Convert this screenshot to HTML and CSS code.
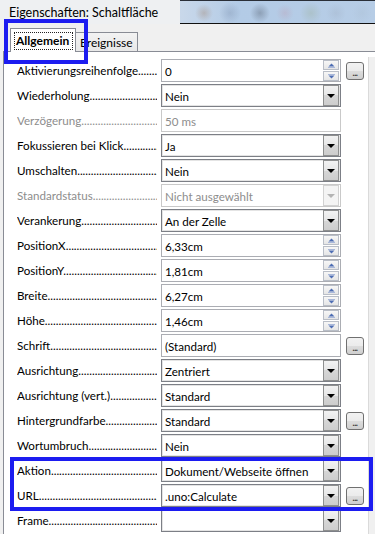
FILE: index.html
```html
<!DOCTYPE html>
<html lang="de">
<head>
    <meta charset="UTF-8">
    <meta name="viewport" content="width=device-width, initial-scale=1.0">
    <title>Eigenschaften: Schaltfläche</title>
    <link rel="stylesheet" href="styles.css">
</head>
<body>
    <div class="titlebar">
        <span class="title">Eigenschaften: Schaltfläche</span>
        <div class="glass"></div>
    </div>

    <div class="tabs">
        <div class="tab active"><span class="focus">Allgemein</span></div>
        <div class="tab">Ereignisse</div>
    </div>

    <div class="panel">
        <div class="props">
            <div class="row">
                <label class="label">Aktivierungsreihenfolge</label>
                <div class="field">
                    <span class="value">0</span>
                    <span class="spinner">
                        <i class="spin-btn"><svg width="7" height="5" viewBox="0 0 7 5"><path d="M0.5 3.5L3.5 0.5L6.5 3.5Z" fill="#4d6db3"/><path d="M0 4.5H7" stroke="#a9b8da"/></svg></i>
                        <i class="spin-btn"><svg width="7" height="5" viewBox="0 0 7 5"><path d="M0 0.5H7" stroke="#a9b8da"/><path d="M0.5 1.5L3.5 4.5L6.5 1.5Z" fill="#4d6db3"/></svg></i>
                    </span>
                </div>
                <button class="more">...</button>
            </div>

            <div class="row">
                <label class="label">Wiederholung</label>
                <div class="field list"><span class="value">Nein</span><span class="drop"></span></div>
            </div>

            <div class="row disabled">
                <label class="label">Verzögerung</label>
                <div class="field"><span class="value">50 ms</span></div>
            </div>

            <div class="row">
                <label class="label">Fokussieren bei Klick</label>
                <div class="field list"><span class="value">Ja</span><span class="drop"></span></div>
            </div>

            <div class="row">
                <label class="label">Umschalten</label>
                <div class="field list"><span class="value">Nein</span><span class="drop"></span></div>
            </div>

            <div class="row disabled">
                <label class="label">Standardstatus</label>
                <div class="field list"><span class="value">Nicht ausgewählt</span><span class="drop"></span></div>
            </div>

            <div class="row">
                <label class="label">Verankerung</label>
                <div class="field list"><span class="value">An der Zelle</span><span class="drop"></span></div>
            </div>

            <div class="row">
                <label class="label">PositionX</label>
                <div class="field">
                    <span class="value">6,33cm</span>
                    <span class="spinner">
                        <i class="spin-btn"><svg width="7" height="5" viewBox="0 0 7 5"><path d="M0.5 3.5L3.5 0.5L6.5 3.5Z" fill="#4d6db3"/><path d="M0 4.5H7" stroke="#a9b8da"/></svg></i>
                        <i class="spin-btn"><svg width="7" height="5" viewBox="0 0 7 5"><path d="M0 0.5H7" stroke="#a9b8da"/><path d="M0.5 1.5L3.5 4.5L6.5 1.5Z" fill="#4d6db3"/></svg></i>
                    </span>
                </div>
            </div>

            <div class="row">
                <label class="label">PositionY</label>
                <div class="field">
                    <span class="value">1,81cm</span>
                    <span class="spinner">
                        <i class="spin-btn"><svg width="7" height="5" viewBox="0 0 7 5"><path d="M0.5 3.5L3.5 0.5L6.5 3.5Z" fill="#4d6db3"/><path d="M0 4.5H7" stroke="#a9b8da"/></svg></i>
                        <i class="spin-btn"><svg width="7" height="5" viewBox="0 0 7 5"><path d="M0 0.5H7" stroke="#a9b8da"/><path d="M0.5 1.5L3.5 4.5L6.5 1.5Z" fill="#4d6db3"/></svg></i>
                    </span>
                </div>
            </div>

            <div class="row">
                <label class="label">Breite</label>
                <div class="field">
                    <span class="value">6,27cm</span>
                    <span class="spinner">
                        <i class="spin-btn"><svg width="7" height="5" viewBox="0 0 7 5"><path d="M0.5 3.5L3.5 0.5L6.5 3.5Z" fill="#4d6db3"/><path d="M0 4.5H7" stroke="#a9b8da"/></svg></i>
                        <i class="spin-btn"><svg width="7" height="5" viewBox="0 0 7 5"><path d="M0 0.5H7" stroke="#a9b8da"/><path d="M0.5 1.5L3.5 4.5L6.5 1.5Z" fill="#4d6db3"/></svg></i>
                    </span>
                </div>
            </div>

            <div class="row">
                <label class="label">Höhe</label>
                <div class="field">
                    <span class="value">1,46cm</span>
                    <span class="spinner">
                        <i class="spin-btn"><svg width="7" height="5" viewBox="0 0 7 5"><path d="M0.5 3.5L3.5 0.5L6.5 3.5Z" fill="#4d6db3"/><path d="M0 4.5H7" stroke="#a9b8da"/></svg></i>
                        <i class="spin-btn"><svg width="7" height="5" viewBox="0 0 7 5"><path d="M0 0.5H7" stroke="#a9b8da"/><path d="M0.5 1.5L3.5 4.5L6.5 1.5Z" fill="#4d6db3"/></svg></i>
                    </span>
                </div>
            </div>

            <div class="row">
                <label class="label">Schrift</label>
                <div class="field"><span class="value">(Standard)</span></div>
                <button class="more">...</button>
            </div>

            <div class="row">
                <label class="label">Ausrichtung</label>
                <div class="field list"><span class="value">Zentriert</span><span class="drop"></span></div>
            </div>

            <div class="row">
                <label class="label">Ausrichtung (vert.)</label>
                <div class="field list"><span class="value">Standard</span><span class="drop"></span></div>
            </div>

            <div class="row">
                <label class="label">Hintergrundfarbe</label>
                <div class="field list"><span class="value">Standard</span><span class="drop"></span></div>
                <button class="more">...</button>
            </div>

            <div class="row">
                <label class="label">Wortumbruch</label>
                <div class="field list"><span class="value">Nein</span><span class="drop"></span></div>
            </div>

            <div class="row">
                <label class="label">Aktion</label>
                <div class="field list"><span class="value">Dokument/Webseite öffnen</span><span class="drop"></span></div>
            </div>

            <div class="row">
                <label class="label">URL</label>
                <div class="field list"><span class="value">.uno:Calculate</span><span class="drop"></span></div>
                <button class="more">...</button>
            </div>

            <div class="row">
                <label class="label">Frame</label>
                <div class="field list"><span class="value"></span><span class="drop"></span></div>
            </div>
        </div>
        <div class="side-strip"></div>
    </div>

    <!-- Markierungen -->
    <div class="mark mark-tab"></div>
    <div class="mark mark-action"></div>
</body>
</html>
```

FILE: styles.css
```css
* {
    box-sizing: border-box;
}

body {
    margin: 0;
    width: 375px;
    height: 534px;
    overflow: hidden;
    position: relative;
    background: #f0f0f0;
    font-family: Lato, "Noto Sans", sans-serif;
    font-size: 12px;
    color: #000;
}

/* Titelleiste */
.titlebar {
    position: relative;
    height: 24px;
    padding-left: 9px;
    line-height: 25px;
    font-size: 12.5px;
    background: #eef0f2;
}

.glass {
    position: absolute;
    left: 180px;
    right: 0;
    top: 0;
    height: 24px;
    border-top: 1px solid #2a2f38;
    border-bottom: 1px solid #111;
    background:
        radial-gradient(circle at 24px 12px, rgba(150, 110, 80, 0.3) 0, transparent 9px),
        radial-gradient(circle at 50px 12px, rgba(120, 140, 170, 0.35) 0, transparent 11px),
        radial-gradient(circle at 80px 12px, rgba(70, 80, 95, 0.35) 0, transparent 10px),
        radial-gradient(circle at 105px 12px, rgba(190, 150, 170, 0.3) 0, transparent 9px),
        radial-gradient(circle at 131px 12px, rgba(150, 170, 140, 0.3) 0, transparent 11px),
        radial-gradient(circle at 156px 12px, rgba(160, 175, 195, 0.35) 0, transparent 10px),
        radial-gradient(circle at 182px 12px, rgba(170, 190, 210, 0.35) 0, transparent 10px),
        linear-gradient(to right, #c9d8ea, #b3cbe6 30%, #b7cde6);
}

/* Reiter */
.tabs {
    display: flex;
    align-items: flex-end;
    height: 27px;
    padding-left: 10px;
}

.tab {
    height: 19px;
    padding: 0 4px;
    line-height: 19px;
    border: 1px solid #898c95;
    border-bottom: none;
    background: linear-gradient(#f3f3f3, #e8e8e8);
    margin-left: -1px;
}

.tab.active {
    position: relative;
    top: 1px;
    height: 24px;
    width: 66px;
    padding: 3px 2px 0 3px;
    background: #fff;
    font-weight: bold;
    z-index: 2;
    margin-left: 0;
}

.tab.active .focus {
    display: block;
    height: 18px;
    line-height: 16px;
    padding-left: 1px;
    border: 1px dotted #222;
}

/* Eigenschaftenliste */
.panel {
    display: flex;
    height: 483px;
    margin-left: 3px;
    background: #fff;
    border-top: 1px solid #898c95;
    border-left: 1px solid #898c95;
}

.props {
    width: 364px;
    padding: 7px 0 0 13px;
    font-size: 11.6px;
}

.side-strip {
    flex: 1;
    margin-top: 5px;
    background: #f0f0f0;
    border-left: 1px solid #dadada;
}

.row {
    display: flex;
    align-items: center;
    height: 23px;
    margin-bottom: 2px;
}

.label {
    width: 140px;
    overflow: hidden;
    white-space: nowrap;
}

.label::after {
    content: "..................................................................";
}

.row.disabled .label,
.row.disabled .value {
    color: #8d8d8d;
}

.field {
    display: flex;
    align-items: center;
    width: 180px;
    height: 23px;
    margin-left: 4px;
    padding-left: 3px;
    border: 1px solid #abadb3;
    background: #fff;
    white-space: nowrap;
}

.field.list {
    border-color: #7c7f86;
    box-shadow: inset 0 0 0 1px #e4e4e4;
}

.row.disabled .field {
    border-color: #c9c9c9;
    box-shadow: none;
}

.value {
    flex: 1;
    padding-top: 1px;
}

.drop {
    position: relative;
    width: 16px;
    height: 21px;
    margin-right: 1px;
    border: 1px solid #8e8f8f;
    background: linear-gradient(#f2f2f2, #e6e6e6 50%, #d6d6d6 50%, #cdcdcd);
}

.drop::after {
    content: '';
    position: absolute;
    left: 3px;
    top: 8px;
    border-left: 4px solid transparent;
    border-right: 4px solid transparent;
    border-top: 4px solid #000;
}

.row.disabled .drop {
    border-color: #d2d2d2;
    background: #f4f4f4;
}

.row.disabled .drop::after {
    border-top-color: #b4b4b4;
}

.spinner {
    display: flex;
    flex-direction: column;
    gap: 1px;
    width: 16px;
    height: 21px;
    margin-right: 1px;
}

.spin-btn {
    display: flex;
    align-items: center;
    justify-content: center;
    flex: 1;
    border: 1px solid #b9bec7;
    background: linear-gradient(#f7f7f7, #e6e6e6);
}

.more {
    width: 18px;
    height: 18px;
    margin-left: 5px;
    padding: 4px 0 0;
    border: 1px solid #707070;
    border-radius: 3px;
    background: linear-gradient(#f2f2f2, #ebebeb 50%, #dddddd 50%, #cfcfcf);
    font-family: Lato, sans-serif;
    font-size: 9px;
    font-weight: bold;
    letter-spacing: -0.5px;
    color: #333;
    line-height: 10px;
}

/* Blaue Rahmen */
.mark {
    position: absolute;
    border: 4px solid #1c1cf0;
    pointer-events: none;
}

.mark-tab {
    left: 4px;
    top: 19px;
    width: 84px;
    height: 45px;
}

.mark-action {
    left: 10px;
    top: 457px;
    width: 363px;
    height: 54px;
}
```
